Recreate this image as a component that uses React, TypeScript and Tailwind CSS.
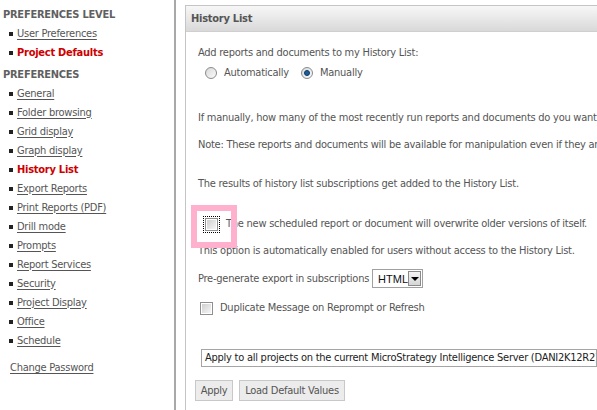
import React from "react";

const font = { fontFamily: '"DejaVu Sans Condensed", "DejaVu Sans", sans-serif' };

const levels = [
  { label: "User Preferences", active: false },
  { label: "Project Defaults", active: true },
];

const prefs = [
  "General",
  "Folder browsing",
  "Grid display",
  "Graph display",
  "History List",
  "Export Reports",
  "Print Reports (PDF)",
  "Drill mode",
  "Prompts",
  "Report Services",
  "Security",
  "Project Display",
  "Office",
  "Schedule",
];

function NavItem({ label, active }: { label: string; active: boolean }) {
  return (
    <li className="flex items-center h-[19px] pl-[9px]">
      <span className="w-[4px] h-[4px] bg-[#222] mr-[4px] shrink-0" />
      {active ? (
        <span className="font-bold text-[#cc0000]">{label}</span>
      ) : (
        <a className="text-[#555] underline underline-offset-[2px]">{label}</a>
      )}
    </li>
  );
}

function Radio({ checked }: { checked?: boolean }) {
  return (
    <span className="w-[12px] h-[12px] rounded-full border border-[#8a8a8a] bg-gradient-to-br from-[#d8d8d8] to-[#fbfbfb] flex items-center justify-center shrink-0">
      {checked && <span className="w-[6px] h-[6px] rounded-full bg-[#1a5e9a] border border-[#0c3b66]" />}
    </span>
  );
}

function Checkbox() {
  return (
    <span className="w-[13px] h-[13px] border border-[#8f8f8f] bg-white p-[1px] shrink-0">
      <span className="block w-full h-full bg-gradient-to-br from-[#cfcfcf] to-[#f6f6f6]" />
    </span>
  );
}

export default function App() {
  return (
    <div
      className="flex w-[597px] h-[410px] overflow-hidden bg-white text-[11px] leading-[16px] tracking-[-0.25px] text-[#555]"
      style={font}
    >
      {/* Sidebar */}
      <div className="w-[176px] shrink-0 border-r-2 border-[#a8a8a8] pt-[7px]">
        <div className="pl-[3px] font-bold text-[#5f5f5f] h-[17px]">PREFERENCES LEVEL</div>
        <ul>
          {levels.map((l) => (
            <NavItem key={l.label} label={l.label} active={l.active} />
          ))}
        </ul>
        <div className="pl-[3px] mt-[5px] font-bold text-[#5f5f5f] h-[17px]">PREFERENCES</div>
        <ul>
          {prefs.map((p) => (
            <NavItem key={p} label={p} active={p === "History List"} />
          ))}
        </ul>
        <a className="block mt-[10px] pl-[10px] text-[#555] underline underline-offset-[2px]">Change Password</a>
      </div>

      {/* Main panel */}
      <div className="flex-1 min-w-0 pl-[9px] pt-[5px]">
        <div className="border-l border-t border-[#c4c4c4] h-full">
          <div className="h-[26px] flex items-center pl-[5px] font-bold text-[#555] bg-gradient-to-b from-[#f7f7f7] to-[#d9d9d9] border-b border-[#cfcfcf] whitespace-nowrap">
            History List
          </div>
          <div className="pl-[12px] whitespace-nowrap">
            <div className="mt-[13px]">Add reports and documents to my History List:</div>
            <div className="flex items-center mt-[4px] pl-[7px] h-[16px]">
              <Radio />
              <span className="ml-[7px]">Automatically</span>
              <span className="ml-[12px]" />
              <Radio checked />
              <span className="ml-[7px]">Manually</span>
            </div>
            <div className="mt-[29px]">If manually, how many of the most recently run reports and documents do you want</div>
            <div className="mt-[11px]">Note: These reports and documents will be available for manipulation even if they are</div>
            <div className="mt-[23px]">The results of history list subscriptions get added to the History List.</div>

            <div className="relative flex items-center mt-[24px] h-[16px]">
              <span className="ml-[7px] outline outline-1 outline-dotted outline-black outline-offset-[1px] flex">
                <Checkbox />
              </span>
              <span className="ml-[8px]">The new scheduled report or document will overwrite older versions of itself.</span>
              <span className="absolute left-[-7px] top-[-11px] w-[46px] h-[43px] border-[6px] border-[#ffb0cc]" />
            </div>
            <div className="mt-[11px]">This option is automatically enabled for users without access to the History List.</div>
            <div className="flex items-center mt-[10px] h-[19px]">
              <span>Pre-generate export in subscriptions</span>
              <span className="ml-[3px] w-[51px] flex items-center justify-between h-[19px] border border-[#a0a0a0] pl-[5px] pr-[1px] tracking-normal">
                <span className="text-[#111] text-[11px]" style={{ fontFamily: '"Liberation Sans", sans-serif' }}>HTML</span>
                <span className="w-[14px] h-[15px] border border-[#8a8a8a] bg-gradient-to-b from-[#f4f4f4] to-[#d6d6d6] flex items-center justify-center">
                  <span className="w-0 h-0 border-l-[4px] border-r-[4px] border-t-[4px] border-l-transparent border-r-transparent border-t-black" />
                </span>
              </span>
            </div>
            <div className="flex items-center mt-[12px] h-[16px] pl-[2px]">
              <Checkbox />
              <span className="ml-[7px]">Duplicate Message on Reprompt or Refresh</span>
            </div>

            <div className="mt-[33px] ml-[3px] h-[18px] border border-[#a5a5a5] flex items-center pl-[3px] text-[#222] overflow-hidden">
              Apply to all projects on the current MicroStrategy Intelligence Server (DANI2K12R2)
            </div>
            <div className="flex mt-[13px] gap-[6px] -ml-[3px]">
              <button className="h-[21px] w-[38px] border border-[#c8c8c8] bg-[#ececec] text-[#555]">Apply</button>
              <button className="h-[21px] w-[106px] border border-[#c8c8c8] bg-[#ececec] text-[#555]">Load Default Values</button>
            </div>
          </div>
        </div>
      </div>
    </div>
  );
}
